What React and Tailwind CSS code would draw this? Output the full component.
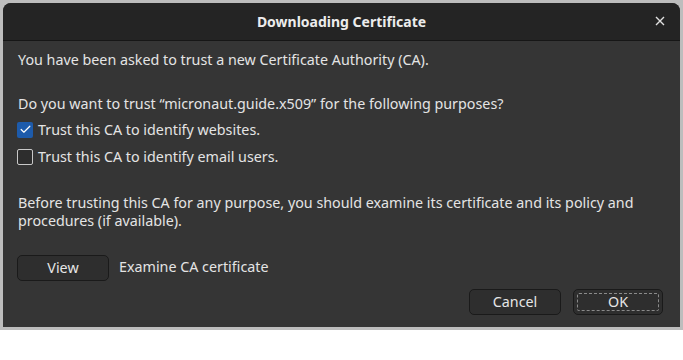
import { Check } from "lucide-react";

function Checkbox({ checked, label }) {
  return (
    <div className="flex items-center h-[27px]">
      {checked ? (
        <span className="w-[16px] h-[16px] ml-[14px] rounded-[2px] bg-[#1d5bab] flex items-center justify-center">
          <Check size={13} strokeWidth={2.2} className="text-white" />
        </span>
      ) : (
        <span className="w-[16px] h-[16px] ml-[14px] rounded-[2px] border border-[#c8c8c8] bg-[#2d2d2d]" />
      )}
      <span className="ml-[5px]">{label}</span>
    </div>
  );
}

function Button({ children, focused, className = "" }) {
  return (
    <button className={`relative h-[26px] rounded-[5px] border border-[#1a1a1a] bg-[#2e2e2e] text-[#e6e6e6] ${className}`}>
      {focused && <span className="absolute inset-[3px] rounded-[2px] border border-dashed border-[#8a8a8a]" />}
      {children}
    </button>
  );
}

export default function App() {
  return (
    <div className="w-[683px] h-[360px] bg-white" style={{ fontFamily: '"Noto Sans", sans-serif' }}>
      <div className="w-[683px] h-[330px] bg-[#bdbdbd] p-[3px]">
        <div className="h-full flex flex-col rounded-t-[8px] overflow-hidden bg-[#353535] text-[#e4e4e4] text-[14.3px]">
          <div className="h-[38px] shrink-0 bg-[#242424] border-b border-[#161616] flex items-center justify-center relative">
            <span className="font-bold text-[#ececec] text-[14px]">Downloading Certificate</span>
            <span className="absolute right-[15px] top-[13px] text-[#e0e0e0]">
              <svg width="10" height="10" viewBox="0 0 10 10" stroke="currentColor" strokeWidth="1.4">
                <path d="M1 1L9 9M9 1L1 9" />
              </svg>
            </span>
          </div>
          <div className="flex-1 flex flex-col leading-[20px]">
            <p className="ml-[15px] mt-[9px]">You have been asked to trust a new Certificate Authority (CA).</p>
            <p className="ml-[15px] mt-[24px]">Do you want to trust “micronaut.guide.x509” for the following purposes?</p>
            <div className="mt-[2px]">
              <Checkbox checked label="Trust this CA to identify websites." />
              <Checkbox label="Trust this CA to identify email users." />
            </div>
            <p className="ml-[15px] mt-[24px] mr-[30px] leading-[18px]">
              Before trusting this CA for any purpose, you should examine its certificate and its policy and procedures (if available).
            </p>
            <div className="flex items-center mt-[25px] ml-[14px]">
              <Button className="w-[92px]">View</Button>
              <span className="ml-[10px] -mt-[2px]">Examine CA certificate</span>
            </div>
            <div className="flex justify-end gap-[12px] mt-[8px] mr-[17px]">
              <Button className="w-[92px]">Cancel</Button>
              <Button focused className="w-[90px]">OK</Button>
            </div>
          </div>
        </div>
      </div>
    </div>
  );
}
